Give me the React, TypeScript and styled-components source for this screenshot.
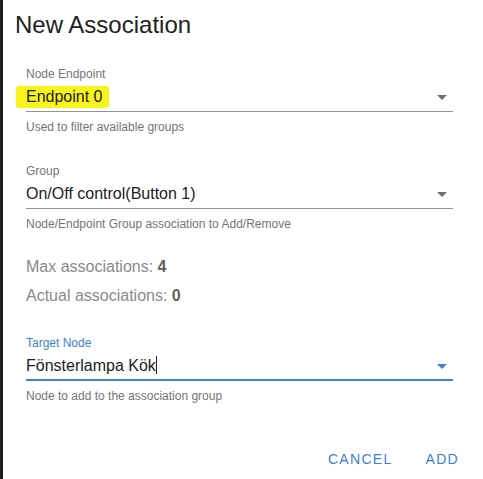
import React from "react";
import styled, { createGlobalStyle } from "styled-components";

const Global = createGlobalStyle`
  html, body { margin: 0; padding: 0; background: #fff; }
  body { font-family: "Liberation Sans", Arial, sans-serif; }
`;

const Dialog = styled.div`
  width: 483px;
  height: 479px;
  box-sizing: border-box;
  border-left: 3px solid #1f1f1f;
  background: #fff;
  display: flex;
  flex-direction: column;
`;

const Title = styled.h2`
  margin: 0;
  padding: 11px 0 0 12px;
  font-size: 24px;
  font-weight: 400;
  color: #212121;
  line-height: 28px;
`;

const Body = styled.div`
  padding: 28px 30px 0 23px;
  display: flex;
  flex-direction: column;
`;

const Field = styled.div<{ $mb?: number; $mt?: number }>`
  display: flex;
  flex-direction: column;
  margin-top: ${(p) => p.$mt ?? 0}px;
  margin-bottom: ${(p) => p.$mb ?? 0}px;
`;

const Label = styled.div<{ $focused?: boolean }>`
  font-size: 12px;
  line-height: 14px;
  color: ${(p) => (p.$focused ? "#3d7fd0" : "#757575")};
`;

const InputRow = styled.div<{ $focused?: boolean }>`
  display: flex;
  align-items: center;
  justify-content: space-between;
  height: 26px;
  margin-top: 3px;
  border-bottom: ${(p) => (p.$focused ? "2px solid #3d7fd0" : "1px solid #949494")};
  padding-bottom: ${(p) => (p.$focused ? "0" : "1px")};
`;

const Value = styled.span<{ $highlight?: boolean }>`
  font-size: 16px;
  color: #212121;
  line-height: 20px;
  ${(p) =>
    p.$highlight
      ? `background: #f9f41c; margin-left: -10px; padding: 1px 6px 1px 10px; border-radius: 3px;`
      : ""}
`;

const Caret = styled.span`
  display: inline-block;
  width: 1px;
  height: 18px;
  background: #212121;
  vertical-align: -3px;
`;

const Arrow = styled.span<{ $color: string }>`
  width: 0;
  height: 0;
  margin-right: 6px;
  border-left: 5px solid transparent;
  border-right: 5px solid transparent;
  border-top: 5px solid ${(p) => p.$color};
`;

const Helper = styled.div`
  margin-top: 8px;
  font-size: 12px;
  line-height: 14px;
  color: #757575;
`;

const Stat = styled.div`
  font-size: 16px;
  line-height: 20px;
  color: #8a8a8a;
  margin-bottom: 9px;
  b { color: #5f5f5f; font-weight: 700; }
`;

const Actions = styled.div`
  margin-top: auto;
  display: flex;
  justify-content: flex-end;
  gap: 33px;
  padding: 0 24px 12px 0;
`;

const Button = styled.button`
  border: 0;
  background: none;
  padding: 0;
  font-family: inherit;
  font-size: 14px;
  letter-spacing: 1.3px;
  color: #3d7fd0;
  cursor: pointer;
`;

export default function App() {
  return (
    <>
      <Global />
      <Dialog>
        <Title>New Association</Title>
        <Body>
          <Field $mb={30}>
            <Label>Node Endpoint</Label>
            <InputRow>
              <Value $highlight>Endpoint 0</Value>
              <Arrow $color="#6e6e6e" />
            </InputRow>
            <Helper>Used to filter available groups</Helper>
          </Field>
          <Field $mb={26}>
            <Label>Group</Label>
            <InputRow>
              <Value>On/Off control(Button 1)</Value>
              <Arrow $color="#6e6e6e" />
            </InputRow>
            <Helper>Node/Endpoint Group association to Add/Remove</Helper>
          </Field>
          <Stat>
            Max associations: <b>4</b>
          </Stat>
          <Stat>
            Actual associations: <b>0</b>
          </Stat>
          <Field $mt={21}>
            <Label $focused>Target Node</Label>
            <InputRow $focused>
              <Value>
                Fönsterlampa Kök<Caret />
              </Value>
              <Arrow $color="#3d7fd0" />
            </InputRow>
            <Helper>Node to add to the association group</Helper>
          </Field>
        </Body>
        <Actions>
          <Button>CANCEL</Button>
          <Button>ADD</Button>
        </Actions>
      </Dialog>
    </>
  );
}
